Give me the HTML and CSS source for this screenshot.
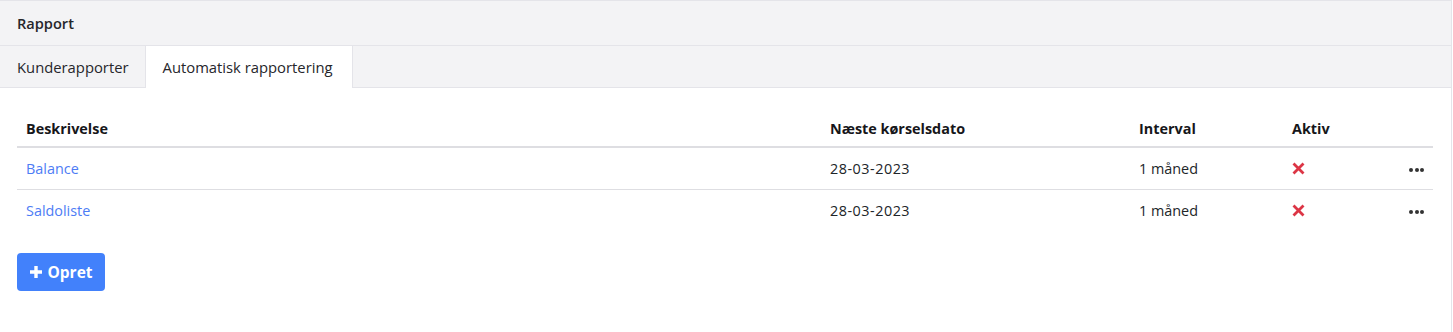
FILE: index.html
```html
<!DOCTYPE html>
<html>
<head>
<meta charset="utf-8">
<link rel="stylesheet" href="styles.css">
</head>
<body>
<div class="card">
  <div class="card-header">Rapport</div>
  <div class="tabs">
    <div class="tab">Kunderapporter</div>
    <div class="tab active">Automatisk rapportering</div>
  </div>
  <div class="card-body">
    <table class="table">
      <colgroup>
        <col class="c1"><col class="c2"><col class="c3"><col class="c4"><col class="c5">
      </colgroup>
      <thead>
        <tr>
          <th>Beskrivelse</th>
          <th>Næste kørselsdato</th>
          <th>Interval</th>
          <th>Aktiv</th>
          <th></th>
        </tr>
      </thead>
      <tbody>
        <tr>
          <td><a class="link" href="#">Balance</a></td>
          <td class="date">28-03-2023</td>
          <td>1 måned</td>
          <td><svg class="x" viewBox="0 0 13 13" width="13" height="13"><path d="M1.5 1.5L11.5 11.5M11.5 1.5L1.5 11.5" stroke="#dc3545" stroke-width="2.8"/></svg></td>
          <td class="dots-cell"><span class="dots"><i></i><i></i><i></i></span></td>
        </tr>
        <tr class="last">
          <td><a class="link" href="#">Saldoliste</a></td>
          <td class="date">28-03-2023</td>
          <td>1 måned</td>
          <td><svg class="x" viewBox="0 0 13 13" width="13" height="13"><path d="M1.5 1.5L11.5 11.5M11.5 1.5L1.5 11.5" stroke="#dc3545" stroke-width="2.8"/></svg></td>
          <td class="dots-cell"><span class="dots"><i></i><i></i><i></i></span></td>
        </tr>
      </tbody>
    </table>
    <button class="btn"><svg viewBox="0 0 14 14" width="14" height="14"><path d="M7 1V13M1 7H13" stroke="#fff" stroke-width="3.4"/></svg><span>Opret</span></button>
  </div>
</div>
</body>
</html>
```
FILE: styles.css
```css
* { box-sizing: border-box; }
body {
  margin: 0;
  font-family: "Open Sans", "Noto Sans", sans-serif;
  font-size: 14.4px;
  color: #212529;
  background: #fff;
}
.card {
  width: 1452px;
  height: 332px;
  border-top: 1px solid #e4e4e9;
  border-right: 1px solid #e4e4e9;
}
.card-header {
  height: 45px;
  background: #f3f3f5;
  border-bottom: 1px solid #e4e4e9;
  padding: 0 17px;
  display: flex;
  align-items: center;
  font-weight: 600;
  font-size: 14.6px;
  color: #26262b;
}
.tabs {
  display: flex;
  height: 42px;
  background: #f3f3f5;
  border-bottom: 1px solid #e4e4e9;
}
.tab {
  display: flex;
  align-items: center;
  padding: 0 16px 0 17px;
  height: 41px;
  color: #26262b;
  font-size: 14.8px;
}
.tab.active {
  background: #fff;
  border-left: 1px solid #e4e4e9;
  border-right: 1px solid #e4e4e9;
  padding: 0 19px 0 17px;
  height: 42px;
}
.card-body {
  padding: 22px 19px 0 17px;
}
.table {
  width: 1416px;
  border-collapse: collapse;
}
.c1 { width: 804px; }
.c2 { width: 309px; }
.c3 { width: 153px; }
.c4 { width: 107px; }
th {
  text-align: left;
  font-weight: 700;
  height: 37px;
  padding: 0 9px;
  border-bottom: 2px solid #dedee2;
  color: #16161a;
  vertical-align: middle;
}
td {
  height: 42px;
  padding: 0 9px;
  border-bottom: 1px solid #dedee2;
  vertical-align: middle;
}
td.date { letter-spacing: 0.5px; }
tr.last td { border-bottom: none; }
.link { color: #4d7cf5; text-decoration: none; }
.x { display: block; margin-left: 0; }
.dots-cell { text-align: right; padding-right: 9px; }
.dots { display: inline-flex; gap: 1.5px; vertical-align: middle; }
.dots i { width: 4px; height: 4px; border-radius: 50%; background: #333; display: block; }
.btn {
  margin-top: 22px;
  height: 38px;
  width: 88px;
  border: none;
  border-radius: 4px;
  background: #4281fb;
  color: #fff;
  font-family: inherit;
  font-size: 15.5px;
  font-weight: 700;
  display: flex;
  align-items: center;
  justify-content: center;
  gap: 4px;
  padding: 0;
}
```
